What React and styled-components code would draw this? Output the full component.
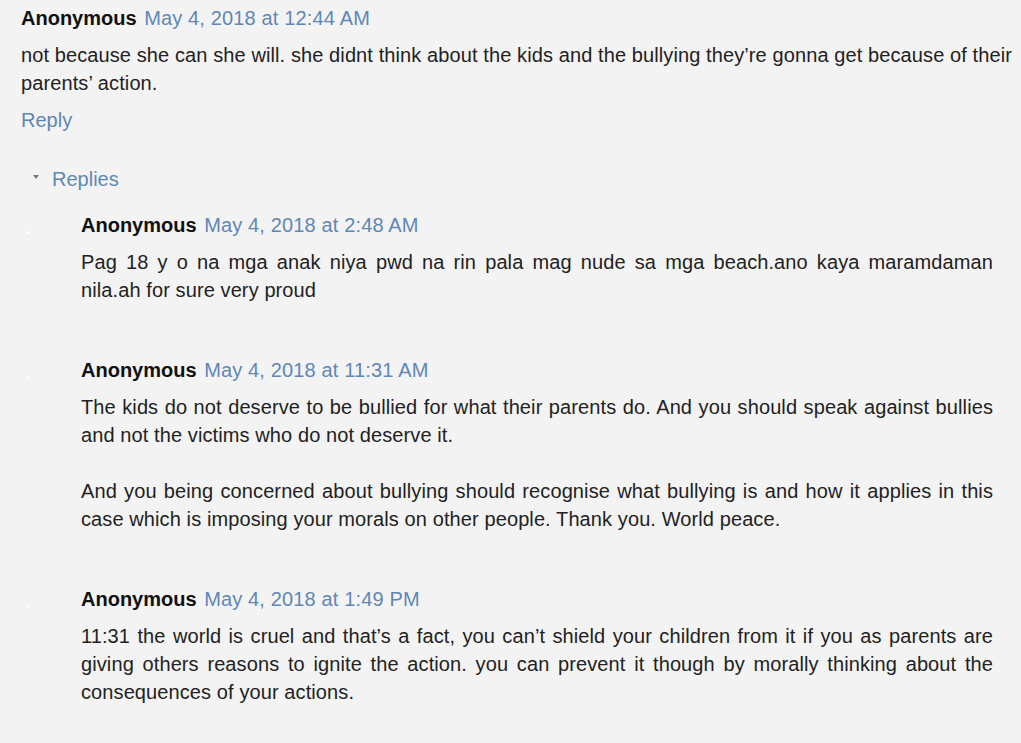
import React from 'react';
import styled, { createGlobalStyle } from 'styled-components';

const GlobalStyle = createGlobalStyle`
  html, body {
    margin: 0;
    padding: 0;
    background: #f3f3f3;
  }
  body {
    font-family: "Liberation Sans", Arial, sans-serif;
    font-size: 20px;
    line-height: 28px;
    color: #222;
  }
`;

const comment = {
  author: 'Anonymous',
  date: 'May 4, 2018 at 12:44 AM',
  body: ['not because she can she will. she didnt think about the kids and the bullying they\u2019re gonna get because of their parents\u2019 action.'],
};

const replies = [
  {
    date: 'May 4, 2018 at 2:48 AM',
    body: ['Pag 18 y o na mga anak niya pwd na rin pala mag nude sa mga beach.ano kaya maramdaman nila.ah for sure very proud'],
  },
  {
    date: 'May 4, 2018 at 11:31 AM',
    body: [
      'The kids do not deserve to be bullied for what their parents do. And you should speak against bullies and not the victims who do not deserve it.',
      'And you being concerned about bullying should recognise what bullying is and how it applies in this case which is imposing your morals on other people. Thank you. World peace.',
    ],
  },
  {
    date: 'May 4, 2018 at 1:49 PM',
    body: ['11:31 the world is cruel and that\u2019s a fact, you can\u2019t shield your children from it if you as parents are giving others reasons to ignite the action. you can prevent it though by morally thinking about the consequences of your actions.'],
  },
];

export default function App() {
  return (
    <Page>
      <GlobalStyle />
      <Thread>
        <Header>
          <Author>{comment.author}</Author> <DateLink href="#">{comment.date}</DateLink>
        </Header>
        <Content>{comment.body[0]}</Content>
        <Action href="#">Reply</Action>

        <RepliesToggle>
          <Caret />
          <ToggleLink href="#">Replies</ToggleLink>
        </RepliesToggle>

        <ReplyList>
          {replies.map((r, i) => (
            <ReplyItem key={i}>
              <AvatarCol>
                <Dot />
              </AvatarCol>
              <ReplyBody>
                <Header>
                  <Author>Anonymous</Author> <DateLink href="#">{r.date}</DateLink>
                </Header>
                <Content>
                  {r.body.map((p, j) => (
                    <Para key={j} $gap={j > 0}>{p}</Para>
                  ))}
                </Content>
              </ReplyBody>
            </ReplyItem>
          ))}
        </ReplyList>
      </Thread>
    </Page>
  );
}

const Page = styled.div`
  width: 1021px;
  height: 743px;
  overflow: hidden;
  background: #f3f3f3;
`;

const Thread = styled.div`
  padding: 4px 9px 0 21px;
`;

const Header = styled.div`
  line-height: 28px;
  margin-bottom: 9px;
`;

const Author = styled.span`
  font-weight: bold;
  color: #111;
`;

const DateLink = styled.a`
  color: #5f87b6;
  text-decoration: none;
  letter-spacing: 0.15px;
  margin-left: 2px;
`;

const Content = styled.div`
  text-align: justify;
  color: #222;
  letter-spacing: 0.1px;
  margin-bottom: 9px;
`;

const Para = styled.p`
  margin: ${p => (p.$gap ? '28px' : '0')} 0 0;
`;

const Action = styled.a`
  display: block;
  color: #5f87b6;
  text-decoration: none;
  margin-bottom: 31px;
`;

const RepliesToggle = styled.div`
  display: flex;
  align-items: center;
  padding-left: 12px;
  margin-bottom: 18px;
`;

const Caret = styled.span`
  width: 0;
  height: 0;
  border-left: 3px solid transparent;
  border-right: 3px solid transparent;
  border-top: 4px solid #777;
  margin-right: 13px;
  margin-top: -4px;
`;

const ToggleLink = styled.a`
  color: #5f87b6;
  text-decoration: none;
`;

const ReplyList = styled.div`
  display: flex;
  flex-direction: column;
  gap: 52px;
`;

const ReplyItem = styled.div`
  display: flex;
`;

const AvatarCol = styled.div`
  width: 60px;
  flex-shrink: 0;
`;

const Dot = styled.div`
  width: 3px;
  height: 3px;
  border-radius: 50%;
  background: #fff;
  margin: 20px 0 0 6px;
`;

const ReplyBody = styled.div`
  flex: 1;
  padding-right: 19px;
  & > ${Content} {
    margin-bottom: 0;
  }
`;
